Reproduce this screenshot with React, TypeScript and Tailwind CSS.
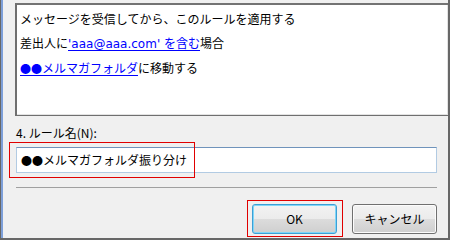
const jp = "font-['Noto_Sans_CJK_JP',sans-serif]";

const RuleDialog = () => {
  return (
    <div
      className={`w-[450px] h-[240px] flex bg-[#f0f0f0] border-l border-b-2 border-r-2 border-[#676767] text-[12px] text-black overflow-hidden ${jp}`}
    >
      {/* window frame accent */}
      <div className="w-[2px] shrink-0 bg-[#7d9fd8]" />
      <div className="flex-1 flex flex-col pt-[3px] relative">
        {/* rule description box */}
        <div className="ml-[12px] h-[113px] bg-white border-t-2 border-l-2 border-b border-[#6f6f6f] border-t-[#737373] shadow-[inset_-1px_-1px_0_#e3e3e3] pl-[3px] pt-[2px] leading-[24px]">
          <div>メッセージを受信してから、このルールを適用する</div>
          <div>
            差出人に
            <span className="text-[#0000ff] underline underline-offset-2">
              <span className="font-['DejaVu_Sans',sans-serif]">'aaa@aaa.com' </span>
              を含む
            </span>
            場合
          </div>
          <div>
            <span className="text-[#0000ff] underline underline-offset-2">
              <span className="text-[11px]">●●</span>メルマガフォルダ
            </span>
            に移動する
          </div>
        </div>

        <div className="ml-[13px] mr-[11px] flex flex-col">
          <div className="mt-[9px] leading-[16px]">4. ルール名(N):</div>
          <div className="mt-[6px] h-[26px] bg-white border border-[#b2cbe3] border-t-[#6f93bb] pl-[4px] flex items-center">
            <span className="text-[11px]">●●</span>メルマガフォルダ振り分け
          </div>
          <div className="mt-[14px] h-px bg-[#a0a0a0]" />
          <div className="mt-[16px] flex justify-end gap-[15px]">
            <button className="w-[85px] h-[30px] rounded-[3px] border border-[#3c9fd6] bg-[linear-gradient(#f3f3f3_0%,#ebebeb_50%,#dcdcdc_50%,#cfcfcf_100%)] shadow-[inset_0_0_0_1px_#7fd6f7] font-normal leading-none">
              OK
            </button>
            <button className="w-[85px] h-[30px] rounded-[3px] border border-[#707070] bg-[linear-gradient(#f3f3f3_0%,#ebebeb_50%,#dddddd_50%,#cfcfcf_100%)] shadow-[inset_0_0_0_1px_#fcfcfc] font-normal leading-none">
              キャンセル
            </button>
          </div>
        </div>

        {/* red annotation frames */}
        <div className="absolute left-[6px] top-[142px] w-[186px] h-[36px] border border-[#e00000]" />
        <div className="absolute left-[244px] top-[200px] w-[96px] h-[37px] border border-[#e00000]" />
      </div>
    </div>
  );
};

export default function App() {
  return <RuleDialog />;
}
